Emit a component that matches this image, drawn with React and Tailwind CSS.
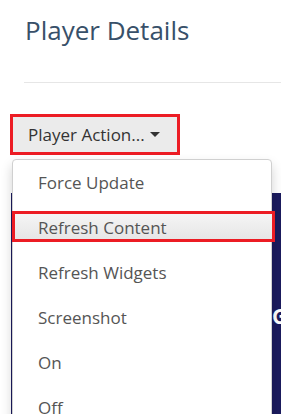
const actions = ['Force Update', 'Refresh Content', 'Refresh Widgets', 'Screenshot', 'On', 'Off'];

function Caret() {
  return (
    <svg width="10" height="5" viewBox="0 0 10 5" className="ml-[5px] shrink-0">
      <path d="M0 0 L10 0 L5 5 Z" fill="#333" />
    </svg>
  );
}

export default function App() {
  return (
    <div className="relative h-[414px] w-full overflow-hidden bg-white font-['Open_Sans',sans-serif]">
      {/* Header */}
      <div className="pt-3">
        <h1 className="pl-[25px] text-[26px] leading-[36px] font-normal text-[#385069]">Player Details</h1>
        <div className="ml-6 mt-[34px] h-px bg-[#e6e6e6]" />
      </div>

      {/* Action button (annotated) */}
      <button className="ml-[10px] mt-[31px] flex h-[41px] w-[170px] items-center border-[3px] border-[#ec1c24] bg-[#ebebeb] pl-[15px] text-[17px] leading-[24px] text-[#333]">
        <span>Player Action...</span>
        <Caret />
      </button>

      {/* Navy content panel behind the menu */}
      <div className="ml-[11px] mt-[38px] h-[260px] bg-[#1b1b5e] pl-[261px] pt-[111px]">
        <span className="whitespace-nowrap text-[21px] font-bold leading-[24px] text-white">G</span>
      </div>

      {/* Dropdown menu */}
      <div className="absolute left-[12px] top-[159px] w-[260px] h-[280px] rounded-[4px] border border-[#d0d0d0] bg-white shadow-[0_6px_12px_rgba(0,0,0,0.18)]">
        {actions.map((a) => (
          <div key={a} className="relative h-[45px] pl-[25px] text-[17px] leading-[45px] text-[#555]">
            {a === 'Refresh Content' && (
              <div className="absolute left-[-1px] right-[-4px] top-[6px] h-[31px] border-[3px] border-[#ec1c24] bg-gradient-to-b from-[#f5f5f5] to-[#e6e6e6]" />
            )}
            <span className="relative">{a}</span>
          </div>
        ))}
      </div>
    </div>
  );
}
